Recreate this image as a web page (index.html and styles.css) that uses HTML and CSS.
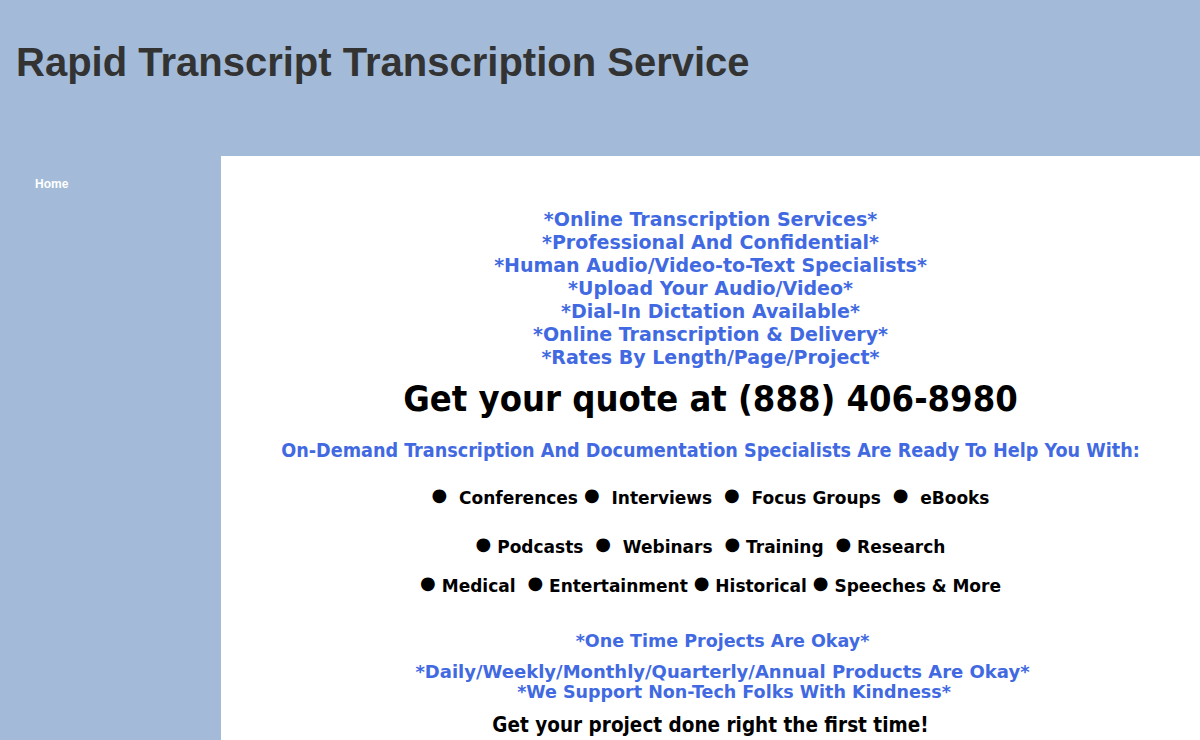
FILE: index.html
```html
<!DOCTYPE html>
<html>
<head>
<meta charset="utf-8">
<link rel="stylesheet" href="styles.css">
</head>
<body>
<header class="site-header">
  <h1 class="site-title">Rapid Transcript Transcription Service</h1>
</header>
<div class="layout">
  <nav class="sidebar">
    <a class="nav-link" href="#">Home</a>
  </nav>
  <main class="content">
    <div class="taglines">
      <p>*Online Transcription Services*</p>
      <p>*Professional And Confidential*</p>
      <p>*Human Audio/Video-to-Text Specialists*</p>
      <p>*Upload Your Audio/Video*</p>
      <p>*Dial-In Dictation Available*</p>
      <p>*Online Transcription &amp; Delivery*</p>
      <p>*Rates By Length/Page/Project*</p>
    </div>
    <h2 class="quote">Get your quote at (888) 406-8980</h2>
    <p class="ready">On-Demand Transcription And Documentation Specialists Are Ready To Help You With:</p>
    <p class="items row1"><span class="dot">●</span>&nbsp; Conferences <span class="dot">●</span>&nbsp; Interviews&nbsp; <span class="dot">●</span>&nbsp; Focus Groups&nbsp; <span class="dot">●</span>&nbsp; eBooks</p>
    <p class="items row2"><span class="dot">●</span> Podcasts&nbsp; <span class="dot">●</span>&nbsp; Webinars&nbsp; <span class="dot">●</span> Training&nbsp; <span class="dot">●</span> Research</p>
    <p class="items row3"><span class="dot">●</span> Medical&nbsp; <span class="dot">●</span> Entertainment <span class="dot">●</span> Historical <span class="dot">●</span> Speeches &amp; More</p>
    <p class="okay first">*One Time Projects Are Okay*</p>
    <p class="okay second">*Daily/Weekly/Monthly/Quarterly/Annual Products Are Okay*</p>
    <p class="okay third">*We Support Non-Tech Folks With Kindness*</p>
    <p class="done">Get your project done right the first time!</p>
  </main>
</div>
</body>
</html>
```
FILE: styles.css
```css
html, body {
  margin: 0;
  padding: 0;
}
body {
  background: #a3bbd8;
  font-family: "Liberation Sans", Arial, sans-serif;
  height: 740px;
  overflow: hidden;
}
.site-header {
  height: 156px;
  box-sizing: border-box;
  padding: 40px 0 0 16px;
}
.site-title {
  margin: 0;
  font-size: 40px;
  font-weight: bold;
  color: #333333;
  line-height: 44px;
}
.layout {
  display: flex;
  align-items: stretch;
  min-height: 584px;
}
.sidebar {
  width: 221px;
  flex: 0 0 221px;
  box-sizing: border-box;
  padding: 18px 0 0 35px;
}
.nav-link {
  color: #ffffff;
  font-weight: bold;
  font-size: 12px;
  text-decoration: none;
  font-family: "Liberation Sans", Arial, sans-serif;
}
.content {
  flex: 1;
  background: #ffffff;
  text-align: center;
  padding-top: 52px;
}
.content p {
  margin: 0;
}
.taglines p {
  font-family: "DejaVu Sans", Verdana, sans-serif;
  font-weight: bold;
  font-size: 19px;
  line-height: 23px;
  color: #4169e1;
}
.quote {
  margin: 10px 0 0;
  font-family: "DejaVu Sans Condensed", Tahoma, sans-serif;
  font-weight: bold;
  font-size: 36px;
  line-height: 40px;
  color: #000000;
}
.ready {
  margin-top: 20px !important;
  font-family: "DejaVu Sans Condensed", Tahoma, sans-serif;
  font-weight: bold;
  font-size: 19.6px;
  line-height: 24px;
  color: #4169e1;
}
.items {
  font-family: "DejaVu Sans", Verdana, sans-serif;
  font-weight: bold;
  font-size: 17px;
  color: #000000;
  line-height: 22px;
}
.dot {
  font-size: 18px;
  position: relative;
  top: -3px;
}
.row1 { margin-top: 24px !important; }
.row2 { margin-top: 27px !important; }
.row3 { margin-top: 17px !important; }
.okay {
  font-family: "DejaVu Sans", Verdana, sans-serif;
  font-weight: bold;
  font-size: 17.5px;
  line-height: 21px;
  color: #4169e1;
  padding-left: 24px;
}
.okay.first { margin-top: 34px !important; }
.okay.second { margin-top: 9px !important; font-size: 18px; }
.okay.third { font-size: 17.5px; padding-left: 47px; }
.done {
  margin-top: 8px !important;
  font-family: "DejaVu Sans Condensed", Tahoma, sans-serif;
  font-weight: bold;
  font-size: 20.5px;
  line-height: 28px;
  color: #000000;
}
```
